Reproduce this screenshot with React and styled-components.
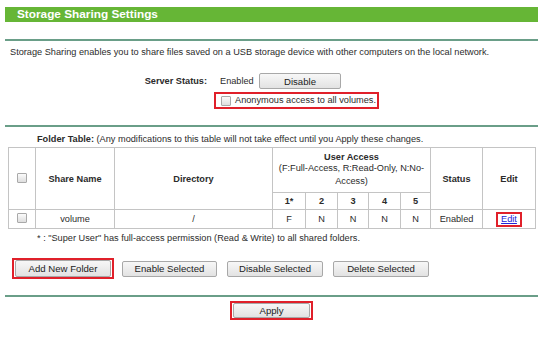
import React from 'react';
import styled, { createGlobalStyle } from 'styled-components';

const GlobalStyle = createGlobalStyle`
  body {
    margin: 0;
    background: #fff;
    font-family: "Liberation Sans", Arial, sans-serif;
    font-size: 9.2px;
    color: #2b2b2b;
  }
`;

const Page = styled.div`
  width: 533px;
  margin-left: 5px;
  padding-top: 7px;
`;

const TitleBar = styled.div`
  height: 15px;
  line-height: 15px;
  background: #66b636;
  color: #fff;
  font-weight: bold;
  font-size: 11.8px;
  padding-left: 12px;
`;

const Rule = styled.div`
  height: 2px;
  background: #6a9e88;
  margin-top: ${(p) => p.$top}px;
`;

const Intro = styled.p`
  margin: 5px 0 0 5px;
  line-height: 12px;
`;

const StatusRow = styled.div`
  display: flex;
  align-items: center;
  margin-top: 15px;
  height: 16px;
`;

const Label = styled.span`
  width: 202px;
  text-align: right;
  font-weight: bold;
`;

const Value = styled.span`
  margin-left: 13px;
  width: 39px;
`;

const Btn = styled.button`
  height: ${(p) => p.$h || 16}px;
  width: ${(p) => p.$w}px;
  margin-left: ${(p) => p.$ml || 0}px;
  padding: 0;
  font-family: inherit;
  font-size: 9.6px;
  color: #222;
  border: 1px solid #a8a8a8;
  border-radius: 2px;
  background: linear-gradient(#f7f7f7, #e2e2e2);
`;

const Highlight = styled.span`
  display: inline-flex;
  align-items: center;
  border: 2px solid #e0202a;
  padding: ${(p) => p.$pad || '0'};
`;

const AnonRow = styled.div`
  display: flex;
  margin: 3px 0 0 209px;
`;

const Check = styled.span`
  display: inline-block;
  width: 8px;
  height: 8px;
  border: 1px solid #a9a9a9;
  border-radius: 1px;
  background: linear-gradient(#fbfbfb, #dedede);
`;

const AnonText = styled.span`
  margin: 0 1px 0 4px;
  line-height: 11px;
`;

const TableNote = styled.p`
  margin: 6px 0 0 32px;
  line-height: 12px;
  b { font-weight: bold; }
`;

const Table = styled.table`
  margin: 2px 0 0 3px;
  border-collapse: collapse;
  width: 528px;
  table-layout: fixed;
  td, th {
    border: 1px solid #c4c4c4;
    text-align: center;
    padding: 0;
    font-size: 9.2px;
  }
  th { font-weight: bold; }
`;

const Sub = styled.div`
  font-weight: normal;
  line-height: 13px;
  white-space: nowrap;
`;

const EditLink = styled.a`
  color: #2323d8;
  text-decoration: underline;
  padding: 0 3px;
  line-height: 11px;
`;

const Footnote = styled.p`
  margin: 3px 0 0 32px;
  line-height: 12px;
`;

const ButtonRow = styled.div`
  display: flex;
  align-items: center;
  margin: 14px 0 0 7px;
`;

const ApplyRow = styled.div`
  display: flex;
  justify-content: center;
  margin-top: 4px;
`;

const cols = [27, 79, 158, 33, 32, 31, 32, 30, 52, 53];

export default function App() {
  return (
    <>
      <GlobalStyle />
      <Page>
        <TitleBar>Storage Sharing Settings</TitleBar>
        <Rule $top={17} />
        <Intro>
          Storage Sharing enables you to share files saved on a USB storage device with other computers on the local network.
        </Intro>
        <StatusRow>
          <Label>Server Status:</Label>
          <Value>Enabled</Value>
          <Btn $w={82}>Disable</Btn>
        </StatusRow>
        <AnonRow>
          <Highlight $pad="1px 0 1px 5px">
            <Check />
            <AnonText>Anonymous access to all volumes.</AnonText>
          </Highlight>
        </AnonRow>
        <Rule $top={16} />
        <TableNote>
          <b>Folder Table:</b> (Any modifications to this table will not take effect until you Apply these changes.
        </TableNote>
        <Table>
          <colgroup>
            {cols.map((w, i) => (
              <col key={i} style={{ width: w }} />
            ))}
          </colgroup>
          <thead>
            <tr style={{ height: 45 }}>
              <th rowSpan={2}><Check /></th>
              <th rowSpan={2}>Share Name</th>
              <th rowSpan={2}>Directory</th>
              <th colSpan={5}>
                User Access
                <Sub>
                  (F:Full-Access, R:Read-Only, N:No-
                  <br />
                  Access)
                </Sub>
              </th>
              <th rowSpan={2}>Status</th>
              <th rowSpan={2}>Edit</th>
            </tr>
            <tr style={{ height: 17 }}>
              <th>1*</th>
              <th>2</th>
              <th>3</th>
              <th>4</th>
              <th>5</th>
            </tr>
          </thead>
          <tbody>
            <tr style={{ height: 19 }}>
              <td><Check /></td>
              <td>volume</td>
              <td>/</td>
              <td>F</td>
              <td>N</td>
              <td>N</td>
              <td>N</td>
              <td>N</td>
              <td>Enabled</td>
              <td>
                <Highlight>
                  <EditLink href="#">Edit</EditLink>
                </Highlight>
              </td>
            </tr>
          </tbody>
        </Table>
        <Footnote>* : "Super User" has full-access permission (Read &amp; Write) to all shared folders.</Footnote>
        <ButtonRow>
          <Highlight $pad="0 1px">
            <Btn $w={96} $h={17}>Add New Folder</Btn>
          </Highlight>
          <Btn $w={95} $ml={8}>Enable Selected</Btn>
          <Btn $w={96} $ml={10}>Disable Selected</Btn>
          <Btn $w={96} $ml={10}>Delete Selected</Btn>
        </ButtonRow>
        <Rule $top={16} />
        <ApplyRow>
          <Highlight $pad="0 1px">
            <Btn $w={77} $h={15}>Apply</Btn>
          </Highlight>
        </ApplyRow>
      </Page>
    </>
  );
}
